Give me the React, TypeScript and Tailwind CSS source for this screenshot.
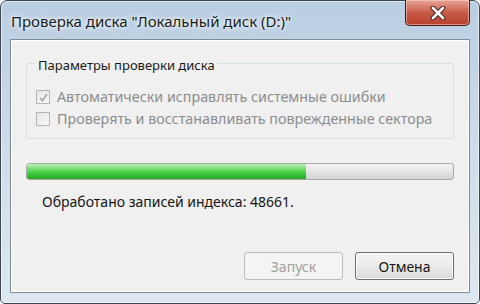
import React from "react";

function Checkbox({ checked }: { checked?: boolean }) {
  return (
    <span className="flex h-[14px] w-[14px] shrink-0 items-center justify-center border border-[#b4b4b4] bg-gradient-to-br from-[#e6e6e6] to-[#f8f8f8]">
      {checked && (
        <svg viewBox="0 0 12 12" className="h-[11px] w-[11px]">
          <path d="M2.5 6.5 L5 9.5 L9.8 2.2" fill="none" stroke="#a3a3a3" strokeWidth="1.6" />
        </svg>
      )}
    </span>
  );
}

export default function App() {
  return (
    <div className="h-[304px] w-[480px] overflow-hidden bg-white font-['Noto_Sans',sans-serif]">
      <div className="flex h-[304px] w-[480px] flex-col rounded-t-[7px] rounded-b-[5px] border border-[#3d4650] bg-gradient-to-b from-[#b9cee2] via-[#cfdcea] to-[#dde7f0] px-[9px] pb-[10px] shadow-[inset_0_0_0_1px_rgba(255,255,255,0.6)]">
        {/* title bar */}
        <div className="flex h-[38px] items-start justify-between">
          <div className="pl-[1px] pt-[10px] text-[15px] leading-[20px] text-[#151a20] [text-shadow:0_0_6px_#ffffff,0_0_3px_#ffffff]">
            Проверка диска "Локальный диск (D:)"
          </div>
          <div className="-mt-px flex h-[26px] w-[65px] items-center justify-center rounded-b-[5px] border border-t-0 border-[#4a1c14] bg-gradient-to-b from-[#e6a598] via-[#c95a48] to-[#b5402c] shadow-[inset_0_0_0_1px_rgba(255,220,210,0.5)]">
            <svg viewBox="0 0 16 14" className="h-[14px] w-[16px]">
              <path d="M3 2 L13 12 M13 2 L3 12" stroke="#4a2a24" strokeWidth="4.6" strokeLinecap="round" />
              <path d="M3 2 L13 12 M13 2 L3 12" stroke="#ffffff" strokeWidth="2.6" strokeLinecap="round" />
            </svg>
          </div>
        </div>

        {/* client area */}
        <div className="flex flex-1 flex-col border border-[#7f8c98] bg-[#f0f0f0] px-[15px] pt-[23px] shadow-[inset_0_0_0_1px_#ffffff]">
          <div className="relative rounded-[3px] border border-[#d5dfe5] pl-[9px] pb-[11px] pt-[25px]">
            <span className="absolute left-[8px] top-[-7px] bg-[#f0f0f0] px-[3px] text-[13px] leading-[16px] text-[#1a1a1a]">
              Параметры проверки диска
            </span>
            <div className="flex flex-col gap-[6px] text-[14.3px] leading-[16px] text-[#8d8d8d]">
              <div className="flex items-center gap-[7px]">
                <Checkbox checked />
                <span>Автоматически исправлять системные ошибки</span>
              </div>
              <div className="flex items-center gap-[7px]">
                <Checkbox />
                <span>Проверять и восстанавливать поврежденные сектора</span>
              </div>
            </div>
          </div>

          <div className="mt-[24px] h-[17px] overflow-hidden rounded-[3px] border border-[#a8a8a8] bg-gradient-to-b from-[#f4f4f4] via-[#e4e4e4] to-[#d4d4d4]">
            <div
              className="h-full bg-gradient-to-b from-[#b8f0b8] via-[#4cd44c] to-[#23a823]"
              style={{ width: "65.6%" }}
            />
          </div>

          <div className="mt-[12px] pl-[16px] text-[14px] leading-[20px] text-[#151515]">
            Обработано записей индекса: 48661.
          </div>

          <div className="mt-auto mb-[12px] flex justify-end gap-[12px]">
            <button className="h-[28px] w-[99px] rounded-[3px] border border-[#b9bdc0] bg-[#f4f4f4] text-[14px] text-[#a2a2a2]">
              Запуск
            </button>
            <button className="h-[28px] w-[99px] rounded-[3px] border border-[#6e6e6e] bg-gradient-to-b from-[#f4f4f4] via-[#ebebeb] to-[#d9d9d9] text-[14px] text-[#151515] shadow-[inset_0_0_0_1px_#fafafa]">
              Отмена
            </button>
          </div>
        </div>
      </div>
    </div>
  );
}
